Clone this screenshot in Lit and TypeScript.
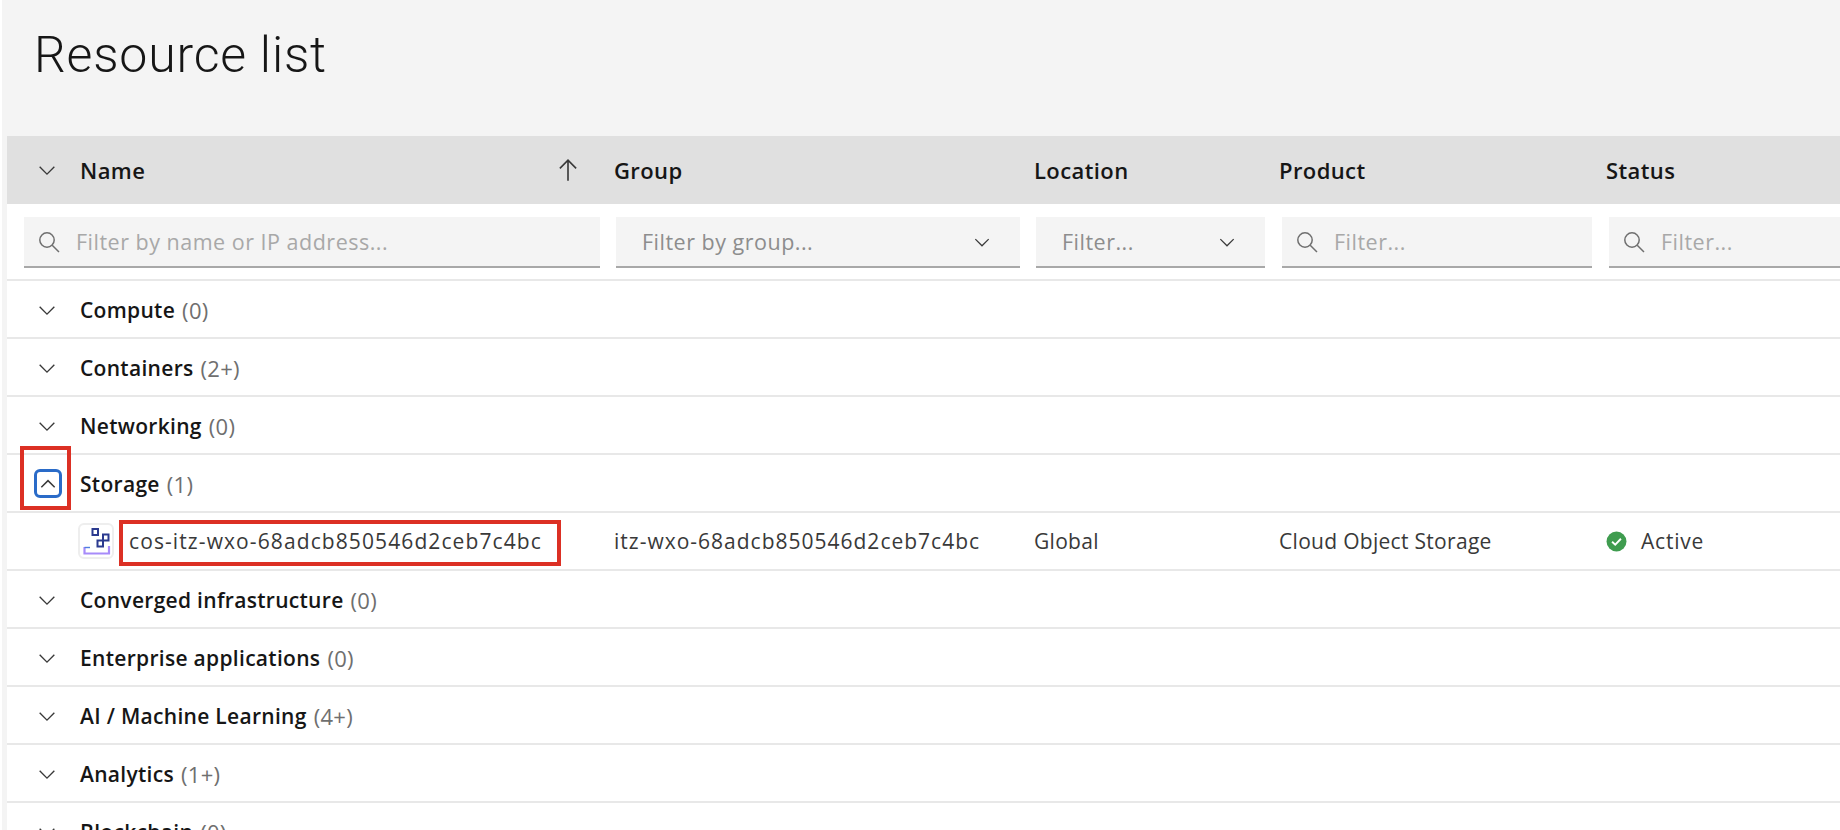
import { LitElement, html, css, svg } from "lit";
import { customElement } from "lit/decorators.js";

const groups = [
  { name: "Compute", count: "(0)" },
  { name: "Containers", count: "(2+)" },
  { name: "Networking", count: "(0)" },
  { name: "Storage", count: "(1)", open: true },
  { name: "Converged infrastructure", count: "(0)" },
  { name: "Enterprise applications", count: "(0)" },
  { name: "AI / Machine Learning", count: "(4+)" },
  { name: "Analytics", count: "(1+)" },
  { name: "Blockchain", count: "(0)" },
];

const chevronDown = svg`<path d="M4 8.5 L12 16.5 L20 8.5" fill="none" stroke="currentColor" stroke-width="1.5"/>`;
const chevronUp = svg`<path d="M4 16 L12 8 L20 16" fill="none" stroke="currentColor" stroke-width="1.8"/>`;

@customElement("app-root")
export class AppRoot extends LitElement {
  static styles = css`
    :host {
      display: block;
      position: relative;
      height: 830px;
      overflow: hidden;
      background: #fff;
      padding-left: 2px;
      box-sizing: border-box;
      font-family: "Open Sans", "Liberation Sans", sans-serif;
      color: #161616;
    }
    .page {
      height: 830px;
      background: #f4f4f4;
      padding-top: 1px;
      box-sizing: border-box;
    }
    .title {
      height: 135px;
      margin: 0;
      padding: 23px 0 0 32px;
      box-sizing: border-box;
      font-size: 50px;
      line-height: 62px;
      font-weight: 300;
      font-family: "Roboto", sans-serif;
      letter-spacing: 0.8px;
    }
    .table {
      margin-left: 5px;
      background: #fff;
      height: 700px;
    }
    .cols {
      display: grid;
      grid-template-columns: 601px 420px 245px 327px 1fr;
    }
    .head {
      height: 68px;
      background: #e0e0e0;
      align-items: center;
      font-size: 22px;
      font-weight: 600;
      letter-spacing: 0.4px;
    }
    .head > div {
      padding-left: 6px;
    }
    .head .name {
      display: flex;
      align-items: center;
      padding-left: 0;
    }
    .chev {
      width: 22px;
      height: 22px;
      margin-left: 29px;
      margin-right: 22px;
      flex: none;
      display: block;
      color: #393939;
    }
    .sort {
      width: 26px;
      height: 26px;
      margin-left: auto;
      margin-right: 27px;
      color: #393939;
    }
    .filters {
      height: 77px;
      padding-top: 13px;
      box-sizing: border-box;
      border-bottom: 2px solid #e8e8e8;
    }
    .filters > div {
      padding: 0 8px;
    }
    .filters > div:first-child {
      padding: 0 8px 0 17px;
    }
    .filters > div:nth-child(4),
    .filters > div:last-child {
      padding-left: 9px;
    }
    .filters > div:last-child {
      padding-right: 0;
    }
    .field {
      height: 51px;
      background: #f4f4f4;
      border-bottom: 2px solid #a8a8a8;
      box-sizing: border-box;
      display: flex;
      align-items: center;
      padding-left: 13px;
      font-size: 21.5px;
      letter-spacing: 0.5px;
      color: #a8a8a8;
      white-space: nowrap;
    }
    .field.select {
      padding: 0 28px 0 26px;
      justify-content: space-between;
      color: #8d8d8d;
    }
    .field svg.search {
      width: 24px;
      height: 24px;
      margin-right: 15px;
      color: #6f6f6f;
      flex: none;
    }
    .field svg.drop {
      width: 20px;
      height: 20px;
      color: #393939;
    }
    .row {
      height: 58px;
      box-sizing: border-box;
      border-bottom: 2px solid #e8e8e8;
      padding-top: 1px;
      display: flex;
      align-items: center;
      font-size: 21px;
      letter-spacing: 0.3px;
      font-weight: 600;
      white-space: nowrap;
    }
    .row .count {
      font-size: 22px;
      font-weight: 400;
      color: #6f6f6f;
      margin-left: 7px;
    }
    .focus {
      width: 28px;
      height: 29px;
      margin-left: 27px;
      margin-right: 18px;
      border: 3px solid #2a6bc8;
      border-radius: 6px;
      box-sizing: border-box;
      display: flex;
      align-items: center;
      justify-content: center;
      color: #393939;
    }
    .focus svg {
      width: 20px;
      height: 20px;
    }
    .item {
      height: 58px;
      box-sizing: border-box;
      border-bottom: 2px solid #e8e8e8;
      align-items: center;
      font-size: 21px;
      letter-spacing: 0.3px;
      color: #393939;
      white-space: nowrap;
    }
    .item > div {
      padding-left: 6px;
    }
    .item .name {
      display: flex;
      align-items: center;
      padding-left: 71px;
      letter-spacing: 1.1px;
    }
    .item .hash {
      letter-spacing: 1px;
    }
    .tile {
      width: 36px;
      height: 36px;
      margin-right: 15px;
      flex: none;
      border: 2px solid #eeeeee;
      border-radius: 6px;
      box-sizing: border-box;
    }
    .tile svg {
      display: block;
      width: 32px;
      height: 32px;
    }
    .item .status {
      display: flex;
      align-items: center;
      gap: 14px;
      letter-spacing: 0.8px;
    }
    .dot {
      width: 21px;
      height: 21px;
      flex: none;
    }
    .mark {
      position: absolute;
      border: 4px solid #dc3024;
      box-sizing: border-box;
    }
    .mark.toggle {
      left: 20px;
      top: 446px;
      width: 51px;
      height: 64px;
    }
    .mark.label {
      left: 119px;
      top: 520px;
      width: 442px;
      height: 46px;
    }
  `;

  renderSearch(text: string) {
    return html`<div class="field">
      <svg class="search" viewBox="0 0 24 24">
        <circle cx="10" cy="10" r="7.2" fill="none" stroke="currentColor" stroke-width="1.5" />
        <path d="M15.2 15.2 L22 22" stroke="currentColor" stroke-width="1.5" />
      </svg>
      ${text}
    </div>`;
  }

  renderSelect(text: string) {
    return html`<div class="field select">
      ${text}
      <svg class="drop" viewBox="0 0 24 24">${chevronDown}</svg>
    </div>`;
  }

  renderItem() {
    return html`<div class="cols item">
      <div class="name">
        <div class="tile">
          <svg viewBox="0 0 32 32">
            <rect x="12.5" y="4" width="5.5" height="6" fill="none" stroke="#2b3a8f" stroke-width="2" />
            <rect x="23" y="9.5" width="5.5" height="6" fill="none" stroke="#2b3a8f" stroke-width="2" />
            <rect x="17.5" y="15.5" width="5.5" height="6" fill="none" stroke="#2b3a8f" stroke-width="2" />
            <path d="M4.5 22 V28.5 H29 V21" fill="none" stroke="#a78bfa" stroke-width="2.2" />
            <path d="M4.5 22.5 H10" stroke="#4f7fe0" stroke-width="1.4" />
          </svg>
        </div>
        cos-itz-wxo-68adcb850546d2ceb7c4bc
      </div>
      <div class="hash">itz-wxo-68adcb850546d2ceb7c4bc</div>
      <div>Global</div>
      <div>Cloud Object Storage</div>
      <div class="status">
        <svg class="dot" viewBox="0 0 20 20">
          <circle cx="10" cy="10" r="9.5" fill="#3f9c4f" />
          <path d="M5.8 10.2 L8.8 13 L14.2 7.4" fill="none" stroke="#fff" stroke-width="1.8" />
        </svg>
        Active
      </div>
    </div>`;
  }

  render() {
    return html`
      <div class="page">
        <h1 class="title">Resource list</h1>
        <div class="table">
          <div class="cols head">
            <div class="name">
              <svg class="chev" viewBox="0 0 24 24">${chevronDown}</svg>
              Name
              <svg class="sort" viewBox="0 0 24 24">
                <path d="M12 22 V3 M4.5 10.5 L12 3 L19.5 10.5" fill="none" stroke="currentColor" stroke-width="1.5" />
              </svg>
            </div>
            <div>Group</div>
            <div>Location</div>
            <div>Product</div>
            <div>Status</div>
          </div>
          <div class="cols filters">
            <div>${this.renderSearch("Filter by name or IP address...")}</div>
            <div>${this.renderSelect("Filter by group...")}</div>
            <div>${this.renderSelect("Filter...")}</div>
            <div>${this.renderSearch("Filter...")}</div>
            <div>${this.renderSearch("Filter...")}</div>
          </div>
          ${groups.map(
            (g) => html`
              <div class="row">
                ${g.open
                  ? html`<div class="focus"><svg viewBox="0 0 24 24">${chevronUp}</svg></div>`
                  : html`<svg class="chev" viewBox="0 0 24 24">${chevronDown}</svg>`}
                ${g.name}<span class="count">${g.count}</span>
              </div>
              ${g.open ? this.renderItem() : ""}
            `
          )}
        </div>
      </div>
      <div class="mark toggle"></div>
      <div class="mark label"></div>
    `;
  }
}
